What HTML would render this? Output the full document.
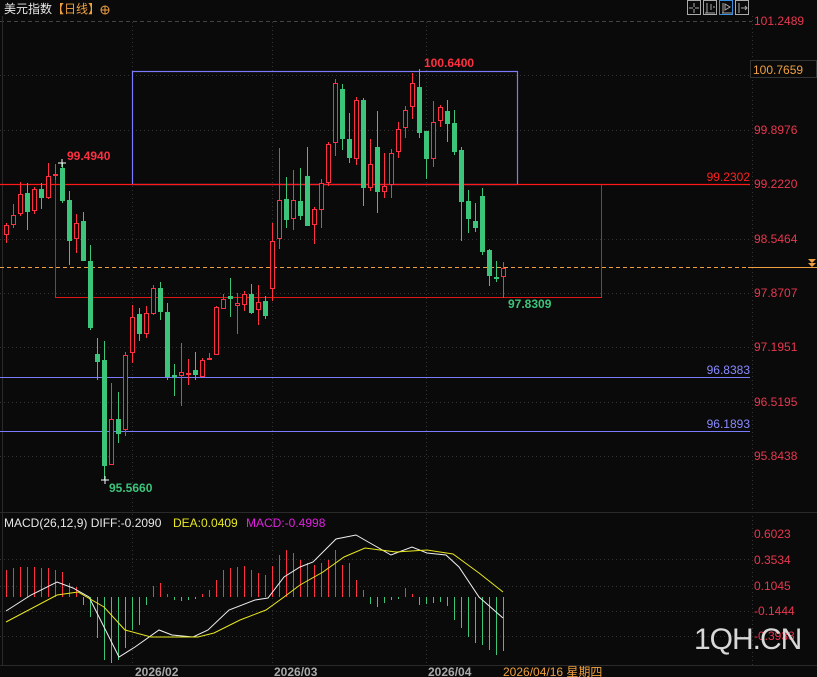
<!DOCTYPE html>
<html><head><meta charset="utf-8"><style>
html,body{margin:0;padding:0;background:#0a0a0a;width:817px;height:677px;overflow:hidden}
svg{display:block}
text{font-family:"Liberation Sans","Noto Sans CJK SC",sans-serif}
</style></head><body>
<svg id="s" width="817" height="677" xmlns="http://www.w3.org/2000/svg">
<rect width="817" height="677" fill="#0a0a0a"/>
<g id="grid" stroke="#333" stroke-dasharray="1,3" stroke-width="1"></g>
<line x1="0" y1="21.5" x2="752" y2="21.5" stroke="#444" stroke-dasharray="4,3"/>
<line x1="2.5" y1="16" x2="2.5" y2="665" stroke="#2a2a2a"/>
<line x1="0" y1="512.5" x2="817" y2="512.5" stroke="#2a2a2a"/>
<line x1="0" y1="665.5" x2="817" y2="665.5" stroke="#2a2a2a"/>
<!-- boxes -->
<rect x="132.5" y="71.5" width="385" height="113" fill="none" stroke="#7b7bff" stroke-width="1.2"/>
<polyline points="55.5,164 55.5,297.5 601.5,297.5 601.5,184.5" fill="none" stroke="#e01818" stroke-width="1"/>
<line x1="0" y1="184.5" x2="750" y2="184.5" stroke="#ff1a1a" stroke-width="1.3"/>
<line x1="0" y1="377.5" x2="750" y2="377.5" stroke="#7b7bff"/>
<line x1="0" y1="431.5" x2="750" y2="431.5" stroke="#7b7bff"/>
<line x1="0" y1="267.5" x2="748" y2="267.5" stroke="#f0a040" stroke-dasharray="4,3"/>
<line x1="748" y1="267.5" x2="817" y2="267.5" stroke="#f0a040"/>
<path d="M808,259 h8 l-4,4 z M808,263 h8 l-4,4 z" fill="#f0a040"/>
<g id="candles"></g>
<g id="macd"></g>
<!-- labels -->
<text x="67" y="160" fill="#ff3040" font-size="12" font-weight="bold">99.4940</text>
<text x="424" y="67" fill="#ff3040" font-size="12" font-weight="bold">100.6400</text>
<text x="109" y="492" fill="#3cc47a" font-size="12" font-weight="bold">95.5660</text>
<text x="508" y="308" fill="#3cc47a" font-size="12" font-weight="bold">97.8309</text>
<path d="M58,163h8M62,159v8M101,480h8M105,476v8" stroke="#fff"/>
<text x="750" y="181" fill="#ff2020" font-size="12" text-anchor="end">99.2302</text>
<text x="750" y="374" fill="#8a8aff" font-size="12" text-anchor="end">96.8383</text>
<text x="750" y="428" fill="#8a8aff" font-size="12" text-anchor="end">96.1893</text>
<g fill="#e8384f" font-size="12">
<text x="754" y="25">101.2489</text>
<text x="754" y="134">99.8976</text>
<text x="754" y="188">99.2220</text>
<text x="754" y="243">98.5464</text>
<text x="754" y="297">97.8707</text>
<text x="754" y="351">97.1951</text>
<text x="754" y="406">96.5195</text>
<text x="754" y="460">95.8438</text>
<text x="754" y="538">0.6023</text>
<text x="754" y="564">0.3534</text>
<text x="754" y="590">0.1045</text>
<text x="754" y="615">-0.1444</text>
<text x="754" y="640">-0.3933</text>
</g>
<rect x="750.5" y="60.5" width="66" height="17" fill="#0a0a0a" stroke="#333"/>
<text x="753" y="74" fill="#f0a040" font-size="12">100.7659</text>
<text x="4" y="13" fill="#e8e8e8" font-size="12">美元指数</text>
<text x="52" y="13" fill="#f0a040" font-size="12">【日线】</text>
<circle cx="105" cy="10" r="4" fill="none" stroke="#f0a040"/><path d="M101,10h8M105,6v8" stroke="#f0a040"/>
<g fill="none" stroke="#aaa">
<rect x="687.5" y="0.5" width="13" height="14"/><rect x="703.5" y="0.5" width="13" height="14"/><rect x="719.5" y="0.5" width="13" height="14" stroke="#3a8fe0"/><rect x="735.5" y="0.5" width="13" height="14"/>
<path d="M694,3v4M694,9v4M689,8h4M695,8h4M707,3v10M705,13h10M711,4v6M713,7h2M723,3v10M722,13h10M725,4l5,3l-5,3z M739,3v10M741,8h6M745,6l2,2l-2,2" stroke-width="1"/>
</g>
<text x="4" y="527" font-size="12" fill="#e8e8e8">MACD(26,12,9) DIFF:-0.2090</text>
<text x="173" y="527" font-size="12" fill="#e8e820">DEA:0.0409</text>
<text x="246" y="527" font-size="12" fill="#e020e0">MACD:-0.4998</text>
<g font-size="12" fill="#aaa" font-weight="bold">
<text x="135" y="676">2026/02</text><text x="274" y="676">2026/03</text><text x="428" y="676">2026/04</text>
</g>
<text x="503" y="676" font-size="12" fill="#f0a040">2026/04/16 星期四</text>
<text x="694" y="649" font-size="30" fill="#d8d8d8" letter-spacing="-1">1QH.CN</text>
</svg>
<script>
var NS="http://www.w3.org/2000/svg";
function el(p,t,a){var e=document.createElementNS(NS,t);for(var k in a)e.setAttribute(k,a[k]);p.appendChild(e);return e;}
var g=document.getElementById('grid');
[75,130,239,293,347,402,456,559,586,611,636].forEach(function(y){el(g,'line',{x1:0,y1:y+.5,x2:752,y2:y+.5});});
[132,272,426].forEach(function(x){el(g,'line',{x1:x+.5,y1:22,x2:x+.5,y2:665});});
el(g,'line',{x1:752.5,y1:16,x2:752.5,y2:665});
// [bodyTop,bodyBot,wickTop,wickBot,red?]
var C=[[225,235,223,243,1],[215,225,204,228,1],[194,214,182,216,1],[193,212,183,230,0],[189,211,187,214,1],[189,198,183,209,0],[176,198,163,199,1],[174,175,164,180,1],[168,201,163,203,0],[200,241,191,265,0],[223,239,214,253,1],[221,261,212,261,0],[261,328,245,330,0],[354,362,338,380,0],[360,466,341,480,0],[419,465,383,465,1],[419,434,392,443,0],[355,430,352,436,1],[317,353,305,363,1],[314,334,308,341,0],[313,334,306,338,1],[288,314,285,315,1],[288,312,282,320,0],[312,377,303,380,0],[375,377,364,396,0],[372,376,343,406,1],[373,375,359,385,1],[370,375,352,380,0],[360,377,358,377,1],[358,359,353,360,1],[307,355,306,355,1],[299,309,294,309,1],[296,299,278,317,0],[303,306,293,334,1],[294,305,291,311,1],[294,313,284,314,0],[302,310,285,325,1],[301,316,296,319,0],[241,289,223,301,1],[200,239,148,249,1],[199,220,177,228,0],[200,219,170,230,1],[201,216,168,220,0],[176,226,147,226,0],[209,225,207,244,1],[183,210,179,228,1],[144,183,142,186,1],[83,143,79,156,1],[89,139,84,150,0],[139,158,113,163,0],[100,159,97,165,1],[100,188,98,206,0],[164,188,139,191,1],[147,192,111,213,0],[186,192,153,198,1],[153,185,149,198,1],[129,152,122,158,1],[110,128,106,138,1],[83,107,73,119,1],[87,133,69,138,0],[131,159,131,179,0],[122,159,101,167,1],[107,121,105,127,1],[111,124,100,142,0],[123,152,110,155,0],[150,202,147,241,0],[201,219,190,233,0],[221,228,203,232,0],[196,252,188,255,0],[250,276,249,286,0],[277,279,261,282,0],[268,277,262,298,1]];
var cg=document.getElementById('candles');
C.forEach(function(c,i){var x=6+7*i,col=c[4]?'#ff3040':'#3cc47a';
el(cg,'line',{x1:x+.5,y1:c[2],x2:x+.5,y2:c[3],stroke:col});
var h=Math.max(c[1]-c[0],1);
if(c[4])el(cg,'rect',{x:x-1.5,y:c[0]+.5,width:4,height:h-1<1?1:h-1,fill:'#0a0a0a',stroke:col});
else el(cg,'rect',{x:x-2,y:c[0],width:5,height:h,fill:col});});
var H=[570,568,567,567,567,568,568,570,572,583,587,605,617,638,660,663,660,648,630,625,605,586,583,594,600,601,600,599,594,590,580,570,568,567,566,570,573,575,566,555,550,553,560,563,565,563,560,550,565,563,580,590,604,607,603,600,599,588,594,605,604,603,602,606,620,628,637,643,645,650,655,651];
var mg=document.getElementById('macd');
H.forEach(function(y,i){var x=6+7*i+.5;el(mg,'line',{x1:x,y1:597,x2:x,y2:y,stroke:y<597?'#ff3040':'#3cc47a'});});
el(mg,'polyline',{points:"6,611 31,595 57,582 73,588 89,597 104,627 119,657 135,647 159,630 172,635 193,637 208,630 229,610 255,600 268,598 284,577 300,567 313,562 336,539 356,535 370,543 391,555 412,547 427,553 446,555 459,567 479,597 503,618",fill:'none',stroke:'#f0f0f0'});
el(mg,'polyline',{points:"6,622 57,595 78,592 104,607 125,630 151,637 198,637 214,633 240,620 266,610 284,597 300,585 323,572 344,557 365,548 396,552 427,550 453,554 479,573 503,592",fill:'none',stroke:'#e8e820'});
</script>
</body></html>
